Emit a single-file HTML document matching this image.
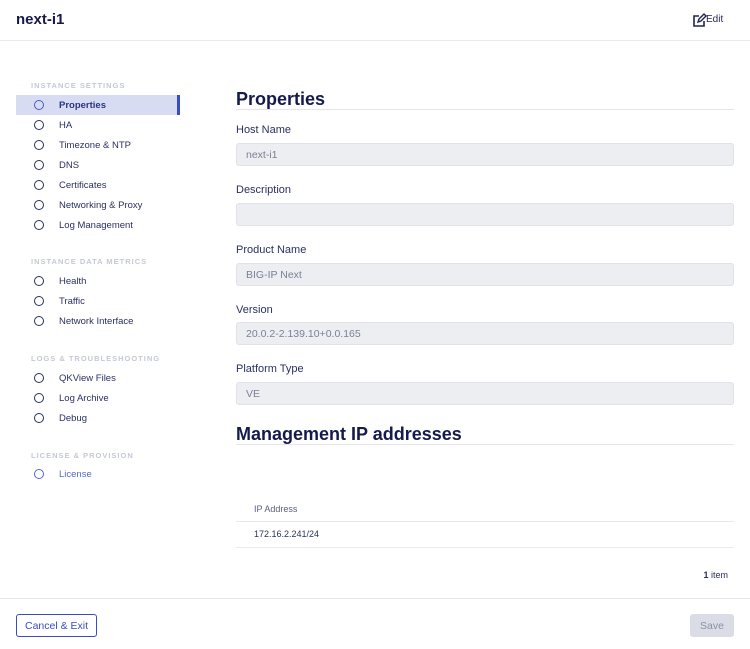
<!DOCTYPE html>
<html><head><style>
*{margin:0;padding:0;box-sizing:border-box}
body{width:750px;height:649px;background:#fff;font-family:"Liberation Sans",sans-serif;color:#1f2550;position:relative;overflow:hidden}
.a{position:absolute;white-space:nowrap}
.sec{position:absolute;left:31px;font-size:7.5px;letter-spacing:1px;color:#c5c8d6;font-weight:bold}
.it{position:absolute;left:16px;width:164px;height:20px;font-size:9.5px;color:#2a3060}
.it i{position:absolute;left:18px;top:5px;width:10px;height:10px;border:1.7px solid #2a3060;border-radius:50%}
.it span{position:absolute;left:43px;top:5px}
.lbl{position:absolute;left:236px;font-size:11px;color:#2a3060}
.inp{position:absolute;left:236px;width:498px;height:23px;background:#eceef2;border:1px solid #e0e2e8;border-radius:3px;font-size:10.5px;color:#7a8096;padding:5px 0 0 9px}
.h{position:absolute;left:236px;width:498px;font-size:18px;line-height:20px;font-weight:bold;color:#141a4e;border-bottom:1px solid #e4e6ec}
.ln{position:absolute;height:1px;background:#e8eaee}
</style></head><body>
<div class="a" style="left:16px;top:11px;font-size:15px;font-weight:bold;color:#141a4e">next-i1</div>
<svg class="a" style="left:692px;top:13px" width="15" height="15" viewBox="0 0 15 15"><path d="M7 3H2v10h10V8" fill="none" stroke="#1f2550" stroke-width="1.6"/><path d="M6 9l1-3 5-5 2 2-5 5z" fill="none" stroke="#1f2550" stroke-width="1.4"/></svg>
<div class="a" style="left:706px;top:14px;font-size:10px;color:#1f2550">Edit</div>
<div class="ln" style="left:0;top:40px;width:750px"></div>

<div class="sec" style="top:81px">INSTANCE SETTINGS</div>
<div class="it" style="top:95px;background:#d8dcf2;border-right:3px solid #3a4cc5"><i style="border-color:#4a5ac8"></i><span style="font-weight:bold;color:#2a3580">Properties</span></div>
<div class="it" style="top:115px"><i></i><span>HA</span></div>
<div class="it" style="top:135px"><i></i><span>Timezone &amp; NTP</span></div>
<div class="it" style="top:155px"><i></i><span>DNS</span></div>
<div class="it" style="top:175px"><i></i><span>Certificates</span></div>
<div class="it" style="top:195px"><i></i><span>Networking &amp; Proxy</span></div>
<div class="it" style="top:215px"><i></i><span>Log Management</span></div>
<div class="sec" style="top:257px">INSTANCE DATA METRICS</div>
<div class="it" style="top:271px"><i></i><span>Health</span></div>
<div class="it" style="top:291px"><i></i><span>Traffic</span></div>
<div class="it" style="top:311px"><i></i><span>Network Interface</span></div>
<div class="sec" style="top:354px">LOGS &amp; TROUBLESHOOTING</div>
<div class="it" style="top:368px"><i></i><span>QKView Files</span></div>
<div class="it" style="top:388px"><i></i><span>Log Archive</span></div>
<div class="it" style="top:408px"><i></i><span>Debug</span></div>
<div class="sec" style="top:451px">LICENSE &amp; PROVISION</div>
<div class="it" style="top:464px"><i style="border-color:#5566dd"></i><span style="color:#5566dd">License</span></div>

<div class="h" style="top:89px">Properties</div>
<div class="lbl" style="top:124px">Host Name</div>
<div class="inp" style="top:143px">next-i1</div>
<div class="lbl" style="top:184px">Description</div>
<div class="inp" style="top:203px"></div>
<div class="lbl" style="top:244px">Product Name</div>
<div class="inp" style="top:263px">BIG-IP Next</div>
<div class="lbl" style="top:304px">Version</div>
<div class="inp" style="top:322px">20.0.2-2.139.10+0.0.165</div>
<div class="lbl" style="top:363px">Platform Type</div>
<div class="inp" style="top:382px">VE</div>
<div class="h" style="top:424px">Management IP addresses</div>

<div class="a" style="left:254px;top:504px;font-size:9px;color:#5a6080">IP Address</div>
<div class="ln" style="left:236px;top:521px;width:498px"></div>
<div class="a" style="left:254px;top:529px;font-size:9px;color:#2a3060">172.16.2.241/24</div>
<div class="ln" style="left:236px;top:547px;width:498px"></div>
<div class="a" style="right:22px;top:570px;font-size:9px;color:#2a3060"><b>1</b> item</div>
<div class="ln" style="left:0;top:598px;width:750px"></div>
<div class="a" style="left:16px;top:614px;width:81px;height:23px;border:1px solid #3a4cc5;border-radius:3px;color:#3a4cc5;font-size:10.5px;display:flex;align-items:center;justify-content:center">Cancel &amp; Exit</div>
<div class="a" style="left:690px;top:614px;width:44px;height:23px;background:#dadde6;border-radius:3px;color:#8a90a6;font-size:10.5px;display:flex;align-items:center;justify-content:center">Save</div>
</body></html>
